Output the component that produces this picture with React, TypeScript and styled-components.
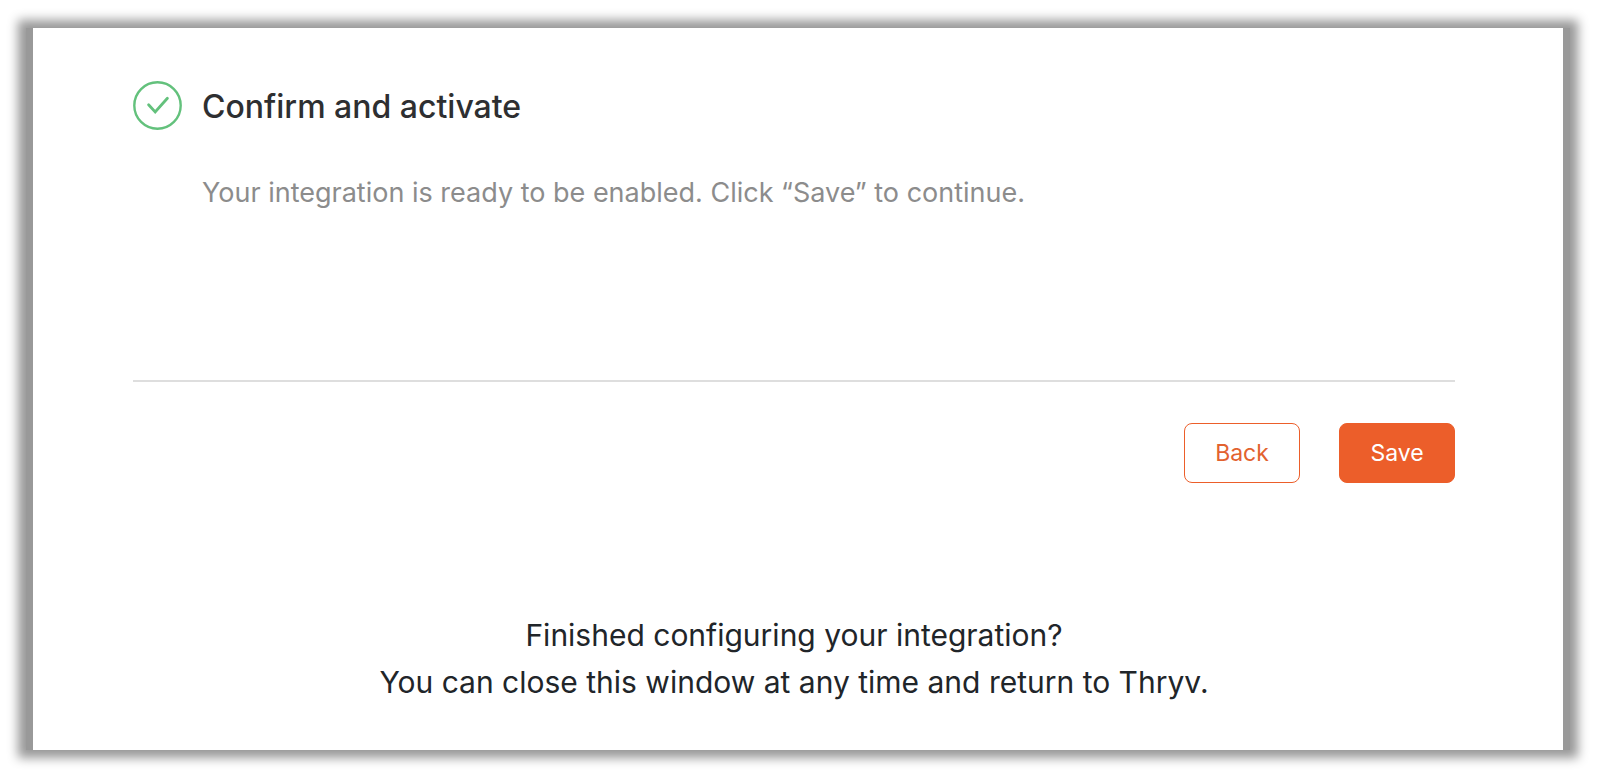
import React from "react";
import styled, { createGlobalStyle } from "styled-components";

const GlobalStyle = createGlobalStyle`
  * { box-sizing: border-box; }
  body { margin: 0; background: #fff; font-family: Inter, "Liberation Sans", sans-serif; }
`;

const Page = styled.div`
  min-height: 100vh;
  display: flex;
  padding: 28px 28px 28px 26px;
`;

const Frame = styled.div`
  flex: 1;
  display: flex;
  padding: 0 7px;
  background: #999;
  box-shadow: 0 0 10px 8px #999;
`;

const Card = styled.main`
  flex: 1;
  padding: 53px 108px 32px 100px;
  background: #fff;
`;

const StepHeader = styled.header`
  display: flex;
  align-items: flex-start;
  gap: 20px;
`;

const Title = styled.h1`
  margin: 0;
  font-size: 32px;
  line-height: 52px;
  font-weight: 500;
  color: #2e2f31;
`;

const Description = styled.p`
  margin: 40px 0 0 69px;
  font-size: 27px;
  line-height: 40px;
  color: #8c8c8c;
`;

const Actions = styled.div`
  display: flex;
  justify-content: flex-end;
  gap: 39px;
  margin-top: 167px;
  padding-top: 41px;
  border-top: 2px solid #dedede;
`;

const Button = styled.button<{ $primary?: boolean }>`
  width: 116px;
  height: 60px;
  padding: 0;
  border: 1px solid #ec5e2a;
  border-radius: 8px;
  background: ${(p) => (p.$primary ? "#ec5e2a" : "#fff")};
  color: ${(p) => (p.$primary ? "#fff" : "#e2622f")};
  font-family: inherit;
  font-size: 23px;
  line-height: 28px;
`;

const Footer = styled.p`
  margin: 129px 0 0;
  text-align: center;
  font-size: 30px;
  line-height: 47px;
  color: #212529;
`;

const Line = styled.span`
  display: block;
`;

export default function App() {
  return (
    <>
      <GlobalStyle />
      <Page>
        <Frame>
          <Card>
            <StepHeader>
              <svg width="49" height="49" viewBox="0 0 49 49" fill="none" stroke="#63c17c" aria-hidden="true">
                <circle cx="24.5" cy="24.5" r="23.2" strokeWidth="2.4" />
                <path d="M15.6 23.8L22.2 31L34.4 17.2" strokeWidth="2.8" strokeLinecap="round" />
              </svg>
              <Title>Confirm and activate</Title>
            </StepHeader>
            <Description>Your integration is ready to be enabled. Click “Save” to continue.</Description>
            <Actions>
              <Button type="button">Back</Button>
              <Button type="button" $primary>Save</Button>
            </Actions>
            <Footer>
              <Line>Finished configuring your integration?</Line>
              <Line>You can close this window at any time and return to Thryv.</Line>
            </Footer>
          </Card>
        </Frame>
      </Page>
    </>
  );
}
